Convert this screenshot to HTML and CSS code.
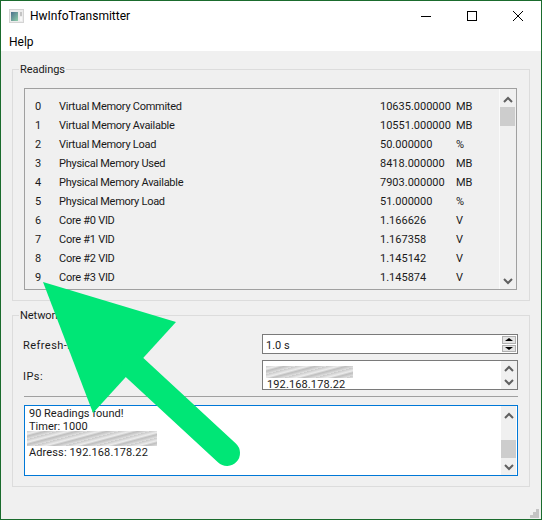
FILE: index.html
```html
<!DOCTYPE html>
<html lang="en">
<head>
    <meta charset="UTF-8">
    <title>HwInfoTransmitter</title>
    <link rel="stylesheet" href="styles.css">
</head>
<body>
    <div class="window">
        <div class="titlebar">
            <svg class="app-icon" width="15" height="14" viewBox="0 0 15 14">
                <defs>
                    <linearGradient id="screen" x1="0" y1="0" x2="1" y2="1">
                        <stop offset="0" stop-color="#4a6f8c"/>
                        <stop offset="1" stop-color="#8fcfa8"/>
                    </linearGradient>
                </defs>
                <rect width="15" height="14" fill="#d4d4d4"/>
                <rect x="1" y="1" width="13" height="12" fill="#ececec"/>
                <rect x="2" y="3" width="7" height="9" fill="url(#screen)"/>
                <rect x="11" y="3" width="2" height="4" fill="#c4c4c4"/>
                <rect x="11" y="8" width="2" height="4" fill="#f8f8f8"/>
            </svg>
            <span class="app-title">HwInfoTransmitter</span>
            <div class="controls">
                <svg width="12" height="12" viewBox="0 0 12 12"><path d="M1 6.5H11" stroke="#000" fill="none"/></svg>
                <svg width="12" height="12" viewBox="0 0 12 12"><rect x="1.5" y="1.5" width="9" height="9" stroke="#000" fill="none"/></svg>
                <svg width="12" height="12" viewBox="0 0 12 12"><path d="M1 1L11 11M11 1L1 11" stroke="#000" fill="none"/></svg>
            </div>
        </div>
        <div class="menubar">Help</div>

        <div class="content">
            <fieldset class="group group-readings">
                <legend>Readings</legend>
                <div class="list">
                    <div class="rows">
                        <div class="row"><span>0</span><span>Virtual Memory Commited</span><span>10635.000000</span><span>MB</span></div>
                        <div class="row"><span>1</span><span>Virtual Memory Available</span><span>10551.000000</span><span>MB</span></div>
                        <div class="row"><span>2</span><span>Virtual Memory Load</span><span>50.000000</span><span>%</span></div>
                        <div class="row"><span>3</span><span>Physical Memory Used</span><span>8418.000000</span><span>MB</span></div>
                        <div class="row"><span>4</span><span>Physical Memory Available</span><span>7903.000000</span><span>MB</span></div>
                        <div class="row"><span>5</span><span>Physical Memory Load</span><span>51.000000</span><span>%</span></div>
                        <div class="row"><span>6</span><span>Core #0 VID</span><span>1.166626</span><span>V</span></div>
                        <div class="row"><span>7</span><span>Core #1 VID</span><span>1.167358</span><span>V</span></div>
                        <div class="row"><span>8</span><span>Core #2 VID</span><span>1.145142</span><span>V</span></div>
                        <div class="row"><span>9</span><span>Core #3 VID</span><span>1.145874</span><span>V</span></div>
                    </div>
                    <div class="scrollbar">
                        <svg class="chev" width="10" height="7" viewBox="0 0 10 7"><path d="M1 6L5 2L9 6" stroke="#606060" stroke-width="2" fill="none"/></svg>
                        <div class="track track-top"><div class="thumb thumb-list"></div></div>
                        <svg class="chev" width="10" height="7" viewBox="0 0 10 7"><path d="M1 1L5 5L9 1" stroke="#606060" stroke-width="2" fill="none"/></svg>
                    </div>
                </div>
            </fieldset>

            <fieldset class="group group-network">
                <legend>Network</legend>
                <div class="form-row row-refresh">
                    <label>Refresh-Rate:</label>
                    <div class="spinbox">
                        <span class="spin-value">1.0 s</span>
                        <div class="spin-buttons">
                            <div class="spin-btn"><i class="tri-up"></i></div>
                            <div class="spin-btn"><i class="tri-down"></i></div>
                        </div>
                    </div>
                </div>
                <div class="form-row row-ips">
                    <label>IPs:</label>
                    <div class="ipbox">
                        <div class="ip-text">
                            <div class="smudge smudge-ip"></div>
                            <div class="address">192.168.178.22</div>
                        </div>
                        <div class="scrollbar scrollbar-ip">
                            <svg class="chev" width="10" height="7" viewBox="0 0 10 7"><path d="M1 6L5 2L9 6" stroke="#606060" stroke-width="2" fill="none"/></svg>
                            <svg class="chev" width="10" height="7" viewBox="0 0 10 7"><path d="M1 1L5 5L9 1" stroke="#606060" stroke-width="2" fill="none"/></svg>
                        </div>
                    </div>
                </div>
                <div class="separator"></div>
                <div class="logbox">
                    <div class="log-text">
                        <div>90 Readings found!</div>
                        <div>Timer: 1000</div>
                        <div class="smudge smudge-log"></div>
                        <div class="address">Adress: 192.168.178.22</div>
                    </div>
                    <div class="scrollbar scrollbar-log">
                        <svg class="chev" width="10" height="7" viewBox="0 0 10 7"><path d="M1 6L5 2L9 6" stroke="#606060" stroke-width="2" fill="none"/></svg>
                        <div class="track track-bottom"><div class="thumb thumb-log"></div></div>
                        <svg class="chev" width="10" height="7" viewBox="0 0 10 7"><path d="M1 1L5 5L9 1" stroke="#606060" stroke-width="2" fill="none"/></svg>
                    </div>
                </div>
            </fieldset>
        </div>

        <svg class="grip" width="9" height="9" viewBox="0 0 9 9">
            <path d="M6 0h3v3H6zM3 3h3v3H3zM6 3h3v3H6zM0 6h3v3H0zM3 6h3v3H3zM6 6h3v3H6z" fill="#c4c4c4"/>
        </svg>
    </div>

    <svg class="arrow" width="542" height="520" viewBox="0 0 542 520">
        <polygon points="43,282 176,322 93,413" fill="#00e676"/>
        <path d="M134 367L227 453" stroke="#00e676" stroke-width="26" stroke-linecap="round" fill="none"/>
    </svg>
</body>
</html>
```

FILE: styles.css
```css
* {
    box-sizing: border-box;
}
html, body {
    margin: 0;
    padding: 0;
}
body {
    width: 542px;
    height: 520px;
    overflow: hidden;
    font-family: Roboto, "Open Sans", sans-serif;
    font-size: 11px;
    color: #1a1a1a;
    position: relative;
}
.window {
    position: relative;
    width: 542px;
    height: 520px;
    border: 1px solid #1a6b2d;
    background: #f0f0f0;
    display: flex;
    flex-direction: column;
}
.titlebar {
    height: 29px;
    background: #fff;
    display: flex;
    align-items: center;
    padding-left: 8px;
    flex: none;
}
.app-icon {
    margin-right: 6px;
}
.app-title {
    font-size: 12px;
    color: #000;
}
.controls {
    margin-left: auto;
    align-self: flex-start;
    display: flex;
    gap: 34px;
    padding: 9px 17px 0 0;
}
.menubar {
    height: 21px;
    background: #fff;
    padding: 5px 0 0 8px;
    font-size: 12px;
    color: #000;
    flex: none;
}
.content {
    padding: 11px 11px 0 11px;
    display: flex;
    flex-direction: column;
    gap: 7px;
}
.group {
    margin: 0;
    border: 1px solid #dcdcdc;
    padding: 0 11px;
    min-width: 0;
}
.group legend {
    margin-left: -5px;
    padding: 0 1px;
    line-height: 15px;
    letter-spacing: -0.05px;
    color: #1a1a1a;
}
.group-readings {
    height: 239px;
}
.group-network {
    height: 179px;
}
.list {
    margin: 11px 1px 0 0;
    height: 202px;
    border: 1px solid #a0a0a0;
    display: flex;
}
.rows {
    flex: 1;
    padding-top: 8px;
}
.row {
    height: 19px;
    line-height: 19px;
    display: grid;
    grid-template-columns: 34px 321px 76px auto;
    white-space: nowrap;
}
.row span:first-child {
    padding-left: 10px;
}
.row span:nth-child(2) {
    letter-spacing: -0.27px;
}
.scrollbar {
    flex: none;
    width: 16px;
    background: #f0f0f0;
    display: flex;
    flex-direction: column;
    align-items: center;
    justify-content: space-between;
    padding: 7px 0 4px;
}
.list .scrollbar {
    margin-right: 1px;
    border-left: 1px solid #fafafa;
}
.chev {
    flex: none;
}
.track {
    flex: 1;
    width: 100%;
    display: flex;
}
.track-top {
    align-items: flex-start;
}
.track-bottom {
    align-items: flex-end;
}
.thumb {
    width: 100%;
    background: #cdcdcd;
}
.thumb-list {
    margin-top: 4px;
    height: 19px;
}
.thumb-log {
    margin-bottom: 6px;
    height: 18px;
}
.form-row {
    display: flex;
    align-items: center;
}
.form-row label {
    width: 238px;
    flex: none;
    padding-top: 2px;
    margin-left: -1px;
    margin-right: 1px;
    letter-spacing: 0.45px;
}
.row-refresh {
    margin-top: 11px;
    height: 20px;
}
.row-ips {
    margin-top: 6px;
    height: 30px;
}
.spinbox {
    flex: 1;
    height: 20px;
    border: 1px solid #7a7a7a;
    background: #fff;
    display: flex;
    align-items: center;
    justify-content: space-between;
    padding-left: 3px;
}
.spin-value {
    padding-top: 2px;
}
.spin-buttons {
    width: 14px;
    height: 16px;
    margin-right: 1px;
    display: flex;
    flex-direction: column;
    gap: 1px;
}
.spin-btn {
    flex: 1;
    background: #e4e4e4;
    border: 1px solid #b0b0b0;
    display: flex;
    align-items: center;
    justify-content: center;
}
.tri-up {
    border: 4px solid transparent;
    border-top-width: 0;
    border-bottom: 3px solid #000;
}
.tri-down {
    border: 4px solid transparent;
    border-bottom-width: 0;
    border-top: 3px solid #000;
}
.ipbox {
    flex: 1;
    height: 30px;
    border: 1px solid #7a7a7a;
    background: #fff;
    display: flex;
    overflow: hidden;
}
.ip-text {
    flex: 1;
    padding: 5px 0 0 4px;
    line-height: 13px;
    white-space: nowrap;
}
.address {
    letter-spacing: 0.12px;
}
.smudge {
    background: repeating-linear-gradient(165deg, #cacaca 0, #ececec 3px, #bfbfbf 5px, #e0e0e0 8px);
}
.smudge-ip {
    width: 87px;
    height: 12px;
    margin-left: -1px;
}
.smudge-log {
    width: 130px;
    height: 15px;
    margin: -2px 0 0 -2px;
}
.scrollbar-ip {
    padding: 4px 0 3px;
}
.separator {
    height: 1px;
    background: #a0a0a0;
    margin-top: 6px;
}
.logbox {
    margin-top: 8px;
    height: 71px;
    border: 1px solid #0078d7;
    background: #fff;
    display: flex;
}
.log-text {
    flex: 1;
    padding: 1px 0 0 4px;
    line-height: 13px;
}
.scrollbar-log {
    width: 15px;
    margin-right: 1px;
    padding: 6px 0 4px;
}
.grip {
    position: absolute;
    right: 2px;
    bottom: 1px;
}
.arrow {
    position: absolute;
    left: 0;
    top: 0;
}
```
